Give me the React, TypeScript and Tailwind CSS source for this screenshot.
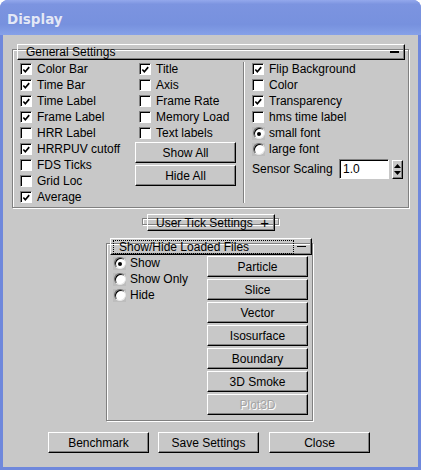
const raised =
  "border border-t-white border-l-white border-r-black border-b-black shadow-[inset_-1px_-1px_0_#808080]";

function Check({ checked }: { checked?: boolean }) {
  return (
    <span className="w-[12px] h-[12px] shrink-0 bg-white border border-t-[#808080] border-l-[#808080] border-r-white border-b-white shadow-[inset_1px_1px_0_#000] flex items-center justify-center">
      {checked && (
        <svg width="10" height="10" viewBox="0 0 10 10" className="ml-[1px] mt-[1px]">
          <path d="M1.5 4.5 L3.7 7 L8 1.8" fill="none" stroke="#000" strokeWidth="1.8" />
        </svg>
      )}
    </span>
  );
}

function CheckRow({ label, checked }: { label: string; checked?: boolean }) {
  return (
    <div className="h-[16px] flex items-center gap-[5px] whitespace-nowrap">
      <Check checked={checked} />
      <span>{label}</span>
    </div>
  );
}

function Radio({ label, on }: { label: string; on?: boolean }) {
  return (
    <div className="h-[16px] flex items-center gap-[4px] whitespace-nowrap">
      <span className="w-[13px] h-[13px] bg-[#bdbdbd] flex items-center justify-center shrink-0">
        <span className="w-[12px] h-[12px] rounded-full bg-white border border-t-[#6a6a6a] border-l-[#6a6a6a] border-r-[#e8e8e8] border-b-[#e8e8e8] shadow-[inset_1px_1px_0_#000] flex items-center justify-center">
          {on && <span className="w-[4px] h-[4px] rounded-full bg-black ml-[1px] mt-[1px]" />}
        </span>
      </span>
      <span>{label}</span>
    </div>
  );
}

function Button({ label, className = "", disabled }: { label: string; className?: string; disabled?: boolean }) {
  return (
    <div className={`h-[21px] flex items-center justify-center bg-[#c8c8c8] ${raised} ${className}`}>
      <span className={disabled ? "text-[#a4a4a4] [text-shadow:1px_1px_0_#fff]" : ""}>{label}</span>
    </div>
  );
}

function Minus() {
  return <span className="w-[9px] h-[1.5px] bg-black" />;
}

export default function App() {
  return (
    <div className="w-[421px] h-[470px] rounded-t-[8px] overflow-hidden bg-[#6f88dc] flex flex-col font-['Liberation_Sans',Arial,sans-serif] text-[12px] text-black">
      {/* Title bar */}
      <div className="h-[35px] shrink-0 flex items-center pl-[7px] pt-[3px] bg-[linear-gradient(to_bottom,#93a8ec_0%,#7c94e0_12%,#7791de_70%,#86a1e8_100%)]">
        <span className="font-['DejaVu_Sans',sans-serif] font-bold text-[13.5px] text-[#e3e8f7] [text-shadow:0_0_1px_#6b82d0]">Display</span>
      </div>

      {/* Content */}
      <div className="flex-1 mx-[3px] mb-[3px] bg-[#c8c8c8] flex flex-col items-start">
        {/* General Settings */}
        <div className="mt-[14px] ml-[9px] w-[397px] h-[159px] border border-[#808080] shadow-[inset_1px_1px_0_#fff,1px_1px_0_#fff]">
          <div className={`-mt-[6px] ml-[4px] w-[388px] h-[16px] pl-[8px] pr-[5px] flex items-center justify-between ${raised}`}>
            <span>General Settings</span>
            <Minus />
          </div>
          <div className="flex items-start pl-[7px]">
            <div className="w-[115px] mt-[1px] flex flex-col">
              <CheckRow label="Color Bar" checked />
              <CheckRow label="Time Bar" checked />
              <CheckRow label="Time Label" checked />
              <CheckRow label="Frame Label" checked />
              <CheckRow label="HRR Label" />
              <CheckRow label="HRRPUV cutoff" checked />
              <CheckRow label="FDS Ticks" />
              <CheckRow label="Grid Loc" />
              <CheckRow label="Average" checked />
            </div>
            <div className="w-[101px] mt-[1px] flex flex-col">
              <div className="pl-[4px] flex flex-col">
                <CheckRow label="Title" checked />
                <CheckRow label="Axis" />
                <CheckRow label="Frame Rate" />
                <CheckRow label="Memory Load" />
                <CheckRow label="Text labels" />
              </div>
              <Button label="Show All" className="mt-[1px]" />
              <Button label="Hide All" className="mt-[2px]" />
            </div>
            <div className="ml-[7px] mt-[2px] w-[2px] h-[141px] border-l border-l-[#808080] border-r border-r-white" />
            <div className="ml-[7px] mt-[1px] flex flex-col">
              <CheckRow label="Flip Background" checked />
              <CheckRow label="Color" />
              <CheckRow label="Transparency" checked />
              <CheckRow label="hms time label" />
              <Radio label="small font" on />
              <Radio label="large font" />
              <div className="mt-[2px] h-[20px] flex items-center">
                <span className="w-[87px] whitespace-nowrap">Sensor Scaling</span>
                <div className="w-[50px] h-[20px] bg-white border border-t-[#808080] border-l-[#808080] border-r-white border-b-white shadow-[inset_1px_1px_0_#000] flex items-center pl-[3px]">
                  1.0
                </div>
                <div className={`ml-[3px] w-[11px] h-[19px] flex flex-col items-center justify-center gap-[3px] ${raised}`}>
                  <svg width="7" height="4" viewBox="0 0 7 4"><path d="M3.5 0 L7 4 L0 4 Z" fill="#000" /></svg>
                  <svg width="7" height="4" viewBox="0 0 7 4"><path d="M0 0 L7 0 L3.5 4 Z" fill="#000" /></svg>
                </div>
              </div>
            </div>
          </div>
        </div>

        {/* User Tick Settings (collapsed) */}
        <div className="mt-[10px] ml-[139px] w-[137px] h-[7px] border border-[#808080] shadow-[inset_1px_1px_0_#fff,1px_1px_0_#fff]">
          <div className={`-mt-[5px] ml-[4px] w-[128px] h-[17px] pl-[8px] pr-[5px] flex items-center justify-between ${raised}`}>
            <span>User Tick Settings</span>
            <span className="text-[15px] leading-none">+</span>
          </div>
        </div>

        {/* Show/Hide Loaded Files */}
        <div className="mt-[18px] ml-[103px] w-[207px] h-[178px] border border-[#808080] shadow-[inset_1px_1px_0_#fff,1px_1px_0_#fff]">
          <div className={`-mt-[6px] ml-[3px] w-[202px] h-[17px] pl-[2px] pr-[5px] flex items-center justify-between ${raised}`}>
            <span className="h-[14px] w-[181px] border border-dotted border-black flex items-center pl-[5px]">Show/Hide Loaded Files</span>
            <Minus />
          </div>
          <div className="flex items-start pl-[6px]">
            <div className="w-[94px] flex flex-col">
              <Radio label="Show" on />
              <Radio label="Show Only" />
              <Radio label="Hide" />
            </div>
            <div className="w-[101px] mt-[1px] flex flex-col gap-[2px]">
              <Button label="Particle" />
              <Button label="Slice" />
              <Button label="Vector" />
              <Button label="Isosurface" />
              <Button label="Boundary" />
              <Button label="3D Smoke" />
              <Button label="Plot3D" disabled />
            </div>
          </div>
        </div>

        {/* Bottom buttons */}
        <div className="mt-[11px] ml-[45px] flex">
          <Button label="Benchmark" className="w-[101px]" />
          <Button label="Save Settings" className="w-[101px] ml-[9px]" />
          <Button label="Close" className="w-[101px] ml-[10px]" />
        </div>
      </div>
    </div>
  );
}
